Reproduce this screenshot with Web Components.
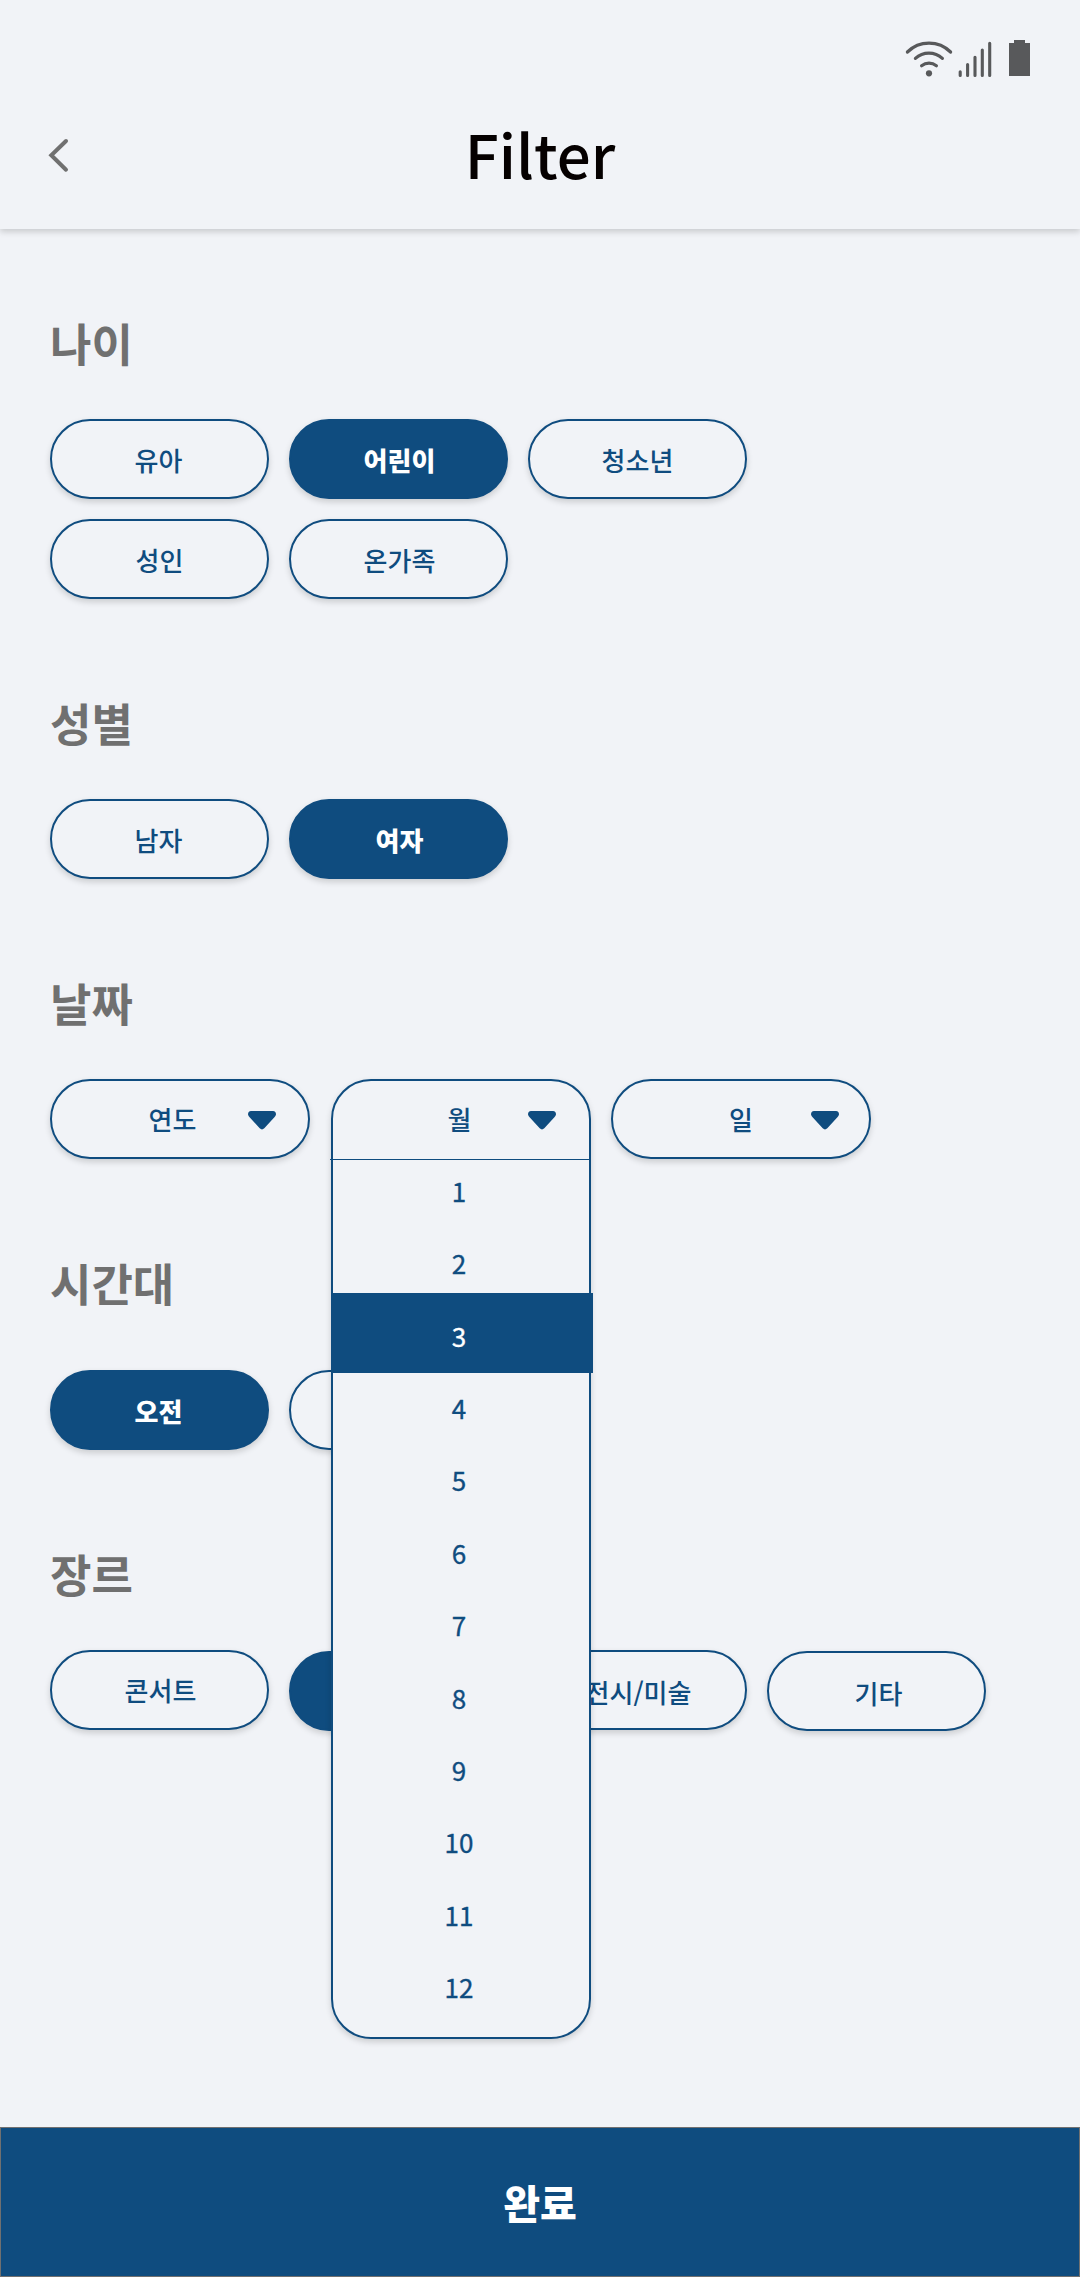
<!DOCTYPE html>
<html lang="ko">
<head>
<meta charset="utf-8">
<title>Filter</title>
<style>
  html, body { margin: 0; padding: 0; }
  body {
    --bg: #f1f3f7;
    --blue: #0f4c7f;
    --grey: #707070;
    --shade: 0 3px 6px rgba(0, 0, 0, .16);
    background: var(--bg);
    font-family: "Noto Sans CJK KR", sans-serif;
    width: 1080px;
  }
</style>
</head>
<body>
<filter-page>
  <app-header slot="header">Filter</app-header>
  <filter-section style="--top:80px">
    <span slot="title">나이</span>
    <choice-pill style="--x:-1px">유아</choice-pill>
    <choice-pill selected style="--x:1px">어린이</choice-pill>
    <choice-pill>청소년</choice-pill>
    <choice-pill>성인</choice-pill>
    <choice-pill style="--x:1px">온가족</choice-pill>
  </filter-section>
  <filter-section>
    <span slot="title">성별</span>
    <choice-pill style="--x:-1px">남자</choice-pill>
    <choice-pill selected style="--x:1px">여자</choice-pill>
  </filter-section>
  <filter-section style="--gap:21px">
    <span slot="title">날짜</span>
    <select-pill style="--shift:15px">연도</select-pill>
    <select-pill open style="--shift:3px;--arrow:35px">월
      <month-menu slot="menu" count="12" current="3"></month-menu>
    </select-pill>
    <select-pill style="--shift:0px;--arrow:32px;margin-left:-1px">일</select-pill>
  </filter-section>
  <filter-section style="--lead:65px">
    <span slot="title">시간대</span>
    <choice-pill selected style="--x:-1px">오전</choice-pill>
    <choice-pill></choice-pill>
  </filter-section>
  <filter-section>
    <span slot="title">장르</span>
    <choice-pill style="--drop:0px;--x:1px">콘서트</choice-pill>
    <choice-pill selected style="margin-top:1px"></choice-pill>
    <choice-pill style="--drop:2px;--x:1px">전시/미술</choice-pill>
    <choice-pill style="margin-top:1px;--drop:2px;--x:2px">기타</choice-pill>
  </filter-section>
  <submit-bar slot="footer">완료</submit-bar>
</filter-page>

<script>
const define = (name, html, setup) => {
  const tpl = document.createElement('template');
  tpl.innerHTML = html;
  customElements.define(name, class extends HTMLElement {
    constructor() {
      super();
      this.attachShadow({ mode: 'open' }).append(tpl.content.cloneNode(true));
    }
    connectedCallback() { if (setup) setup(this, this.shadowRoot); }
  });
};

define('filter-page', `
  <style>
    :host { display: flex; flex-direction: column; height: 2277px; background: var(--bg); }
    main { flex: 1; padding-left: 50px; }
  </style>
  <slot name="header"></slot>
  <main><slot></slot></main>
  <slot name="footer"></slot>`);

define('status-icons', `
  <style>:host { display: block; height: 40px; } svg { display: block; }</style>
  <svg width="126" height="40" viewBox="905 39 126 40" fill="none" stroke="#58595b" stroke-width="3.2" stroke-linecap="round">
    <path d="M907.4 52A30.7 30.7 0 0 1 950.6 52M915.4 58.4A19.8 19.8 0 0 1 942.4 58.4M921.6 65.7A12.3 12.3 0 0 1 936.4 65.7"/>
    <circle cx="929" cy="73.3" r="3.1" fill="#58595b" stroke="none"/>
    <path d="M960.2 71.8V75.5M967.6 64.5V75.5M975 57.3V75.5M982.3 50V75.5M989.7 43.2V75.5" stroke-width="3.1"/>
    <path d="M1014 40h11v3h5v33h-21v-33h5z" fill="#58595b" stroke="none"/>
  </svg>`);

define('app-header', `
  <style>
    :host { display: flex; flex-direction: column; height: 229px; box-shadow: var(--shade); background: var(--bg); }
    status-icons { align-self: flex-end; margin: 39px 49px 0 0; }
    nav { display: grid; grid-template-columns: 100px 1fr 100px; align-items: center; height: 152px; }
    svg { margin-left: 48px; display: block; }
    h1 { margin: 0; height: 152px; text-align: center; font-size: 60px; font-weight: 500; color: #050000; line-height: 148px; }
  </style>
  <status-icons></status-icons>
  <nav>
    <svg width="22" height="36" viewBox="48 137 22 36" fill="none" stroke="#707070" stroke-width="4" stroke-linecap="round"><path d="M66 141L51.3 155.3L66 169.7"/></svg>
    <h1><slot></slot></h1>
  </nav>`);

define('filter-section', `
  <style>
    :host { display: block; padding-top: var(--top, 90px); }
    h2 { margin: 0; height: 56px; line-height: 67px; font-size: 45px; font-weight: 700; color: var(--grey); }
    div { display: flex; flex-wrap: wrap; align-items: flex-start; gap: 20px var(--gap, 20px); padding-top: var(--lead, 54px); width: 960px; }
    :host(:first-of-type) div { max-width: 800px; }
  </style>
  <h2><slot name="title"></slot></h2>
  <div><slot></slot></div>`);

define('choice-pill', `
  <style>
    :host { display: flex; justify-content: center; box-sizing: border-box; width: 219px; height: 80px;
            border: 2px solid var(--blue); border-radius: 40px; background: var(--bg); color: var(--blue);
            box-shadow: var(--shade); font-size: 26px; font-weight: 500; line-height: 76px; padding-top: var(--drop, 1px); }
    :host([selected]) { background: var(--blue); color: #fff; font-weight: 900; }
    span { margin: 0 calc(var(--x, 0px) * -1) 0 var(--x, 0px); }
  </style>
  <span><slot></slot></span>`);

define('select-pill', `
  <style>
    :host { display: flex; position: relative; box-sizing: border-box; width: 260px; height: 80px;
            border: 2px solid var(--blue); border-radius: 40px; background: var(--bg); color: var(--blue);
            box-shadow: var(--shade); font-size: 26px; font-weight: 500; line-height: 76px; }
    :host([open]) { border-color: transparent; box-shadow: none; background: none; z-index: 2; }
    .label { flex: 1; text-align: center; padding-right: var(--shift); z-index: 1; }
    svg { position: absolute; right: calc(var(--arrow, 34px) - 2px); top: 30px; z-index: 1; }
  </style>
  <slot name="menu"></slot>
  <span class="label"><slot></slot></span>
  <svg width="28" height="19" viewBox="0 0 28 19"><path d="M3 0H25Q28 0.4 28 3.4Q27.6 5 26.4 6.2L16.3 17.3Q14 19.6 11.7 17.3L1.6 6.2Q0.4 5 0 3.4Q0 0.4 3 0Z" fill="#0f4c7f"/></svg>`);

define('month-menu', `
  <style>
    :host { display: flex; flex-direction: column; position: absolute; left: -2px; top: -2px; box-sizing: border-box;
            width: 260px; height: 960px; border: 2px solid var(--blue); border-radius: 40px;
            background: var(--bg); box-shadow: var(--shade); padding-top: 78px; }
    hr { margin: 0 0 0 -3px; width: 259px; height: 1px; flex: none; border: 0; background: var(--blue); }
    ol { margin: -5px 0 0; padding: 0; list-style: none; font-weight: 400; -webkit-text-stroke: .35px currentColor; }
    li { height: 72.36px; line-height: 72.36px; text-align: center; padding-right: 4px; }
    li.current { color: #fff; background: var(--blue); height: 80px; line-height: 86px; margin: -6.7px -3.5px -.94px -1px; padding-right: 6.5px; }
  </style>
  <hr><ol></ol>`, (host, root) => {
  const list = root.querySelector('ol');
  list.replaceChildren();
  for (let n = 1; n <= +host.getAttribute('count'); n++) {
    const li = document.createElement('li');
    li.textContent = n;
    if (n === +host.getAttribute('current')) li.className = 'current';
    list.append(li);
  }
});

define('submit-bar', `
  <style>
    :host { display: block; box-sizing: border-box; height: 150px; border: 1px solid var(--grey); background: var(--blue);
            color: #fff; text-align: center; font-size: 40px; font-weight: 900; line-height: 148px; }
  </style>
  <slot></slot>`);
</script>
</body>
</html>
